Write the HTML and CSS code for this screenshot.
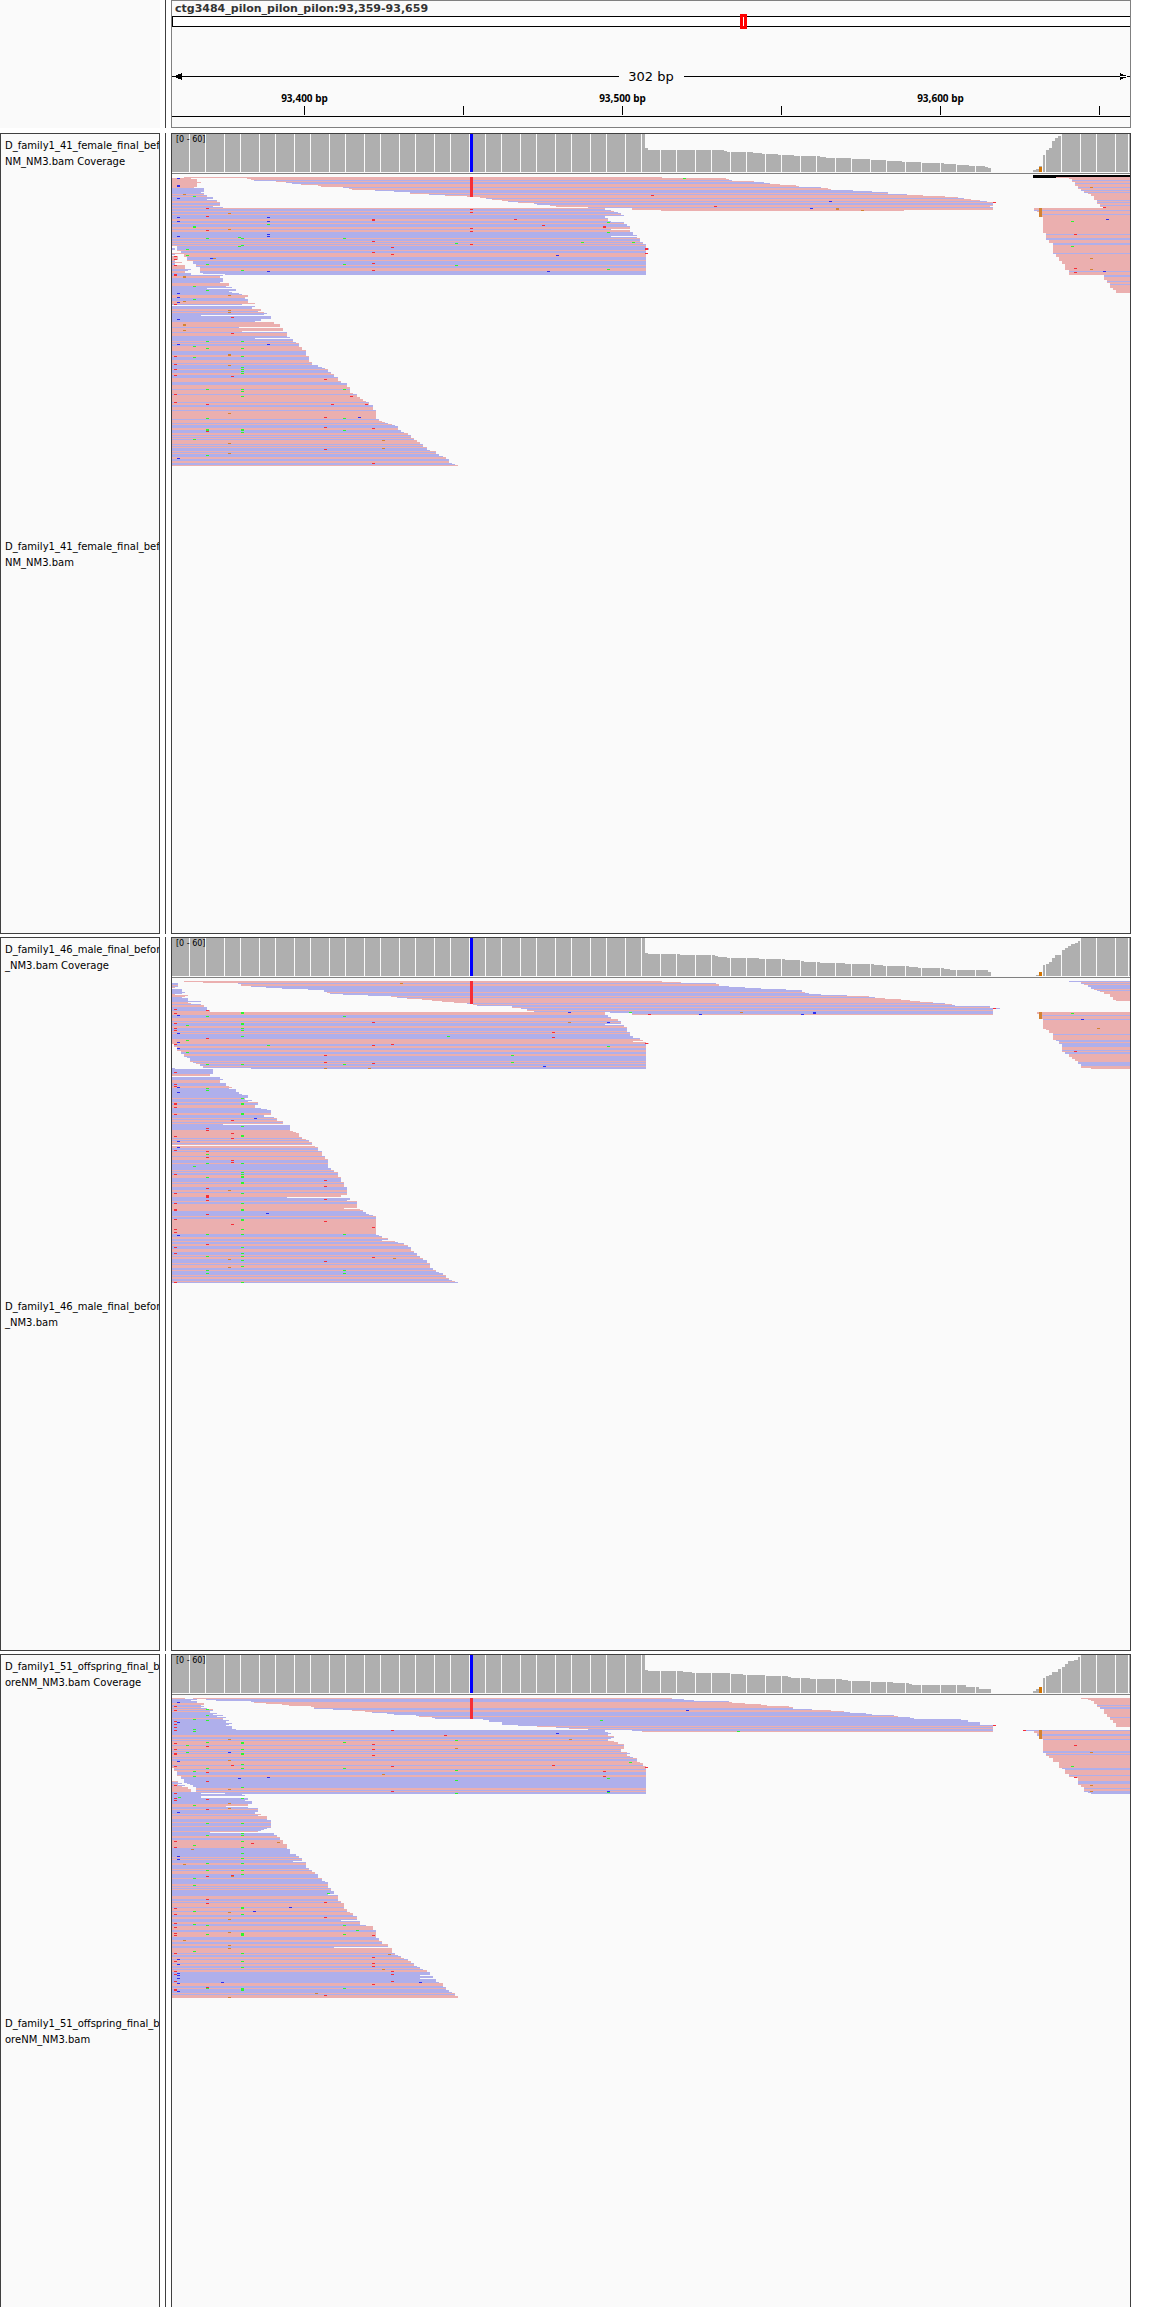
FILE: index.html
```html
<!DOCTYPE html>
<html lang="en">
<head>
<meta charset="utf-8">
<title>ctg3484_pilon_pilon_pilon:93,359-93,659</title>
<link rel="stylesheet" href="styles.css">
</head>
<body>
<main class="viewer">
  <header class="panel panel-header">
    <div class="names names-blank"></div>
    <div class="divider"></div>
    <div class="data data-header">
      <h1 class="locus">ctg3484_pilon_pilon_pilon:93,359-93,659</h1>
      <div class="ideogram"><span class="window-marker"></span></div>
      <div class="span-row">
        <svg class="arrow" viewBox="0 0 11 7"><path d="M0 3H11V4H0ZM3 3L10 0V7L3 4Z"/></svg>
        <span class="rule"></span>
        <span class="span-label">302 bp</span>
        <span class="rule"></span>
        <svg class="arrow" viewBox="0 0 11 7"><path d="M0 3H11V4H0ZM8 3L1 0V7L8 4Z"/></svg>
      </div>
      <div class="tick-labels">
        <span></span><span>93,400 bp</span><span></span><span>93,500 bp</span><span></span><span>93,600 bp</span><span></span>
      </div>
      <div class="ticks"><i></i><i></i><i></i><i></i><i></i><i></i><i></i></div>
    </div>
  </header>

  <section class="panel panel-tall">
    <div class="names">
      <p class="name name-coverage">D_family1_41_female_final_before<br>NM_NM3.bam Coverage</p>
      <p class="name name-reads">D_family1_41_female_final_before<br>NM_NM3.bam</p>
    </div>
    <div class="divider"></div>
    <div class="data">
      <div class="coverage"><span class="range">[0 - 60]</span><svg class="coverage-plot" data-track="0" viewBox="172 0 958 38" preserveAspectRatio="none"></svg></div>
      <svg class="reads" data-track="0" viewBox="172 -3 958 310" preserveAspectRatio="none"></svg>
    </div>
  </section>

  <section class="panel">
    <div class="names">
      <p class="name name-coverage">D_family1_46_male_final_beforeNM<br>_NM3.bam Coverage</p>
      <p class="name name-reads">D_family1_46_male_final_beforeNM<br>_NM3.bam</p>
    </div>
    <div class="divider"></div>
    <div class="data">
      <div class="coverage"><span class="range">[0 - 60]</span><svg class="coverage-plot" data-track="1" viewBox="172 0 958 38" preserveAspectRatio="none"></svg></div>
      <svg class="reads" data-track="1" viewBox="172 -3 958 310" preserveAspectRatio="none"></svg>
    </div>
  </section>

  <section class="panel">
    <div class="names">
      <p class="name name-coverage">D_family1_51_offspring_final_bef<br>oreNM_NM3.bam Coverage</p>
      <p class="name name-reads">D_family1_51_offspring_final_bef<br>oreNM_NM3.bam</p>
    </div>
    <div class="divider"></div>
    <div class="data">
      <div class="coverage"><span class="range">[0 - 60]</span><svg class="coverage-plot" data-track="2" viewBox="172 0 958 38" preserveAspectRatio="none"></svg></div>
      <svg class="reads" data-track="2" viewBox="172 -3 958 310" preserveAspectRatio="none"></svg>
    </div>
  </section>
</main>
<script src="tracks.js"></script>
</body>
</html>
```
FILE: styles.css
```css
* { box-sizing: border-box; }
html, body { height: 100%; }
body {
  margin: 0;
  overflow: hidden;
  background: #fff;
  color: #000;
  font-family: "DejaVu Sans", sans-serif;
}
.viewer {
  display: flex;
  flex-direction: column;
  gap: 3px;
  padding-right: 19px;
}
.panel {
  display: grid;
  grid-template-columns: 160px 1px minmax(0, 1fr);
  column-gap: 5px;
  flex: none;
  height: 714px;
}
.panel-header { height: 128px; margin-bottom: 2px; }
.panel-tall { height: 801px; }
.names {
  display: flex;
  flex-direction: column;
  overflow: hidden;
  border: 1px solid #404040;
  background: #fafafa;
}
.names-blank { border: 0; }
.divider { background: #404040; }
.name {
  display: grid;
  align-content: center;
  margin: 0;
  padding-left: 4px;
  font-size: 10px;
  line-height: 16px;
  white-space: nowrap;
}
.name-coverage { height: 40px; }
.name-reads { flex: 1; padding-top: 2px; }
.data {
  border: 1px solid #404040;
  background: #fafafa;
  overflow: hidden;
}
.data-header { border-color: #808080; }

.locus {
  margin: 0;
  padding-left: 3px;
  color: #333;
  font-size: 11px;
  font-weight: bold;
  line-height: 15px;
}
.ideogram {
  position: relative;
  height: 11px;
  border: 1px solid #000;
  border-right: 0;
  background: #fff;
}
.window-marker {
  position: absolute;
  left: 59.2%;
  top: -3px;
  width: 7px;
  height: 15px;
  border: 3px solid #f00;
}
.span-row {
  display: flex;
  align-items: center;
  height: 19px;
  margin-top: 40px;
}
.rule { flex: 1; height: 1px; background: #000; }
.arrow { width: 11px; height: 7px; flex: none; }
.span-label {
  width: 65px;
  font-size: 13px;
  line-height: 19px;
  text-align: center;
}
.tick-labels {
  display: grid;
  grid-template-columns: 53fr repeat(5, 159fr) 110fr;
  margin-top: 4px;
  font-family: "Noto Sans", sans-serif;
  font-size: 10px;
  font-weight: bold;
  line-height: 16px;
  text-align: center;
}
.ticks {
  display: grid;
  grid-template-columns: 132fr repeat(5, 159fr) 31fr;
  height: 11px;
  border-bottom: 1px solid #000;
}
.ticks i { height: 9px; border-left: 1px solid #000; }
.ticks i:first-child { border: 0; }

.coverage {
  position: relative;
  height: 40px;
  border-bottom: 1px solid #808080;
}
.coverage-plot { display: block; width: 100%; height: 38px; }
.range {
  position: absolute;
  left: 4px;
  top: 1px;
  font-size: 8px;
  line-height: 10px;
}
.reads { display: block; width: 100%; height: 310px; }
svg { shape-rendering: crispEdges; }

.p { fill: #ebafaf; }
.b { fill: #afafeb; }
.mr { fill: #f52d37; }
.mg { fill: #2df52d; }
.mb { fill: #2d2df0; }
.mo { fill: #d28232; }
.gray { fill: #afafaf; }
.grid { fill: #fafafa; }
.snp { fill: #00f; }
.orange { fill: #d27300; }
```
FILE: tracks.js
```js
// Horizontal units are columns of the 958-column window that starts at 172.
// A read group is [first row, row after last, strand runs, left steps, right steps];
// a step "row:column" holds until the next step, and column 0 leaves the row empty.
const tracks = [
  {
    coverage: "172:38 645:24 648:22 724:21 727:20 753:19 762:18 778:17 794:16 820:15 826:14 851:13 871:12 887:11 902:10 921:9 944:8 957:7 969:6 985:5 988:4 991:0 1033:2 1036:3 1039:6 1042:0 1043:17 1046:22 1049:24 1052:31 1055:34 1058:36 1061:38",
    low: 5,
    bar: 20,
    groups: [
      [1, 31, "p10b6pbpb4p2b2pb2", "0:172", "1:191 2:197 5:201 6:197 10:194 11:204 15:201 16:204 18:207 20:213 22:207 23:217 25:220 29:213 30:223"],
      [0, 34, "p3bpb2p3bp2b3pbp3bp2bpb2p2bp3", "0:184 1:247 2:251 3:254 4:276 5:286 6:292 7:301 8:318 9:321 10:343 11:349 12:352 13:375 14:394 15:410 17:429 18:445 19:467 20:480 21:486 22:492 23:502 24:508 25:518 26:534 27:537 28:550 29:556 30:588 31:632 33:661", "0:662 1:726 2:729 3:732 4:754 5:764 6:770 7:780 8:796 9:799 10:821 11:828 12:831 13:853 14:872 15:888 17:907 18:923 19:945 20:958 21:964 22:971 23:980 24:987 25:996 26:993 29:990 30:993 33:904"],
      [31, 98, "pb2pb2pb4p2b2pb3p2bp2b6pb2pbpbpb4pb2p4b3pb4pb2p3b4", "31:172 69:177 74:181 77:184 80:187 84:193 87:196 90:200 96:203 97:225", "31:605 33:611 34:614 35:618 36:621 37:621 38:624 39:605 41:608 44:611 45:624 47:627 49:630 52:611 53:630 55:633 57:633 58:637 59:611 60:637 61:640 65:643 67:646 71:649 73:646 76:648 77:646"],
      [71, 98, "b5pb2p5bpb2p4b2p2b3p4", "71:172", "71:175 73:0 76:184 77:175 78:0 79:178 83:175 85:182 86:175 88:185 92:191 93:188 94:185 96:191"],
      [98, 289, "bp2b5p3b9p3b3p3b5p2bpb9p5bp4bp3b5pbpb2p5b4p2b3p3bpb4pb3p2b3p4b3p4bp4bp7bp2b2p3bp8bp3bpb3p2b3p2bpbpbp4bpbpb3pbpb3p2b2p2b2p", "98:172", "98:223 99:220 101:223 105:220 106:229 109:226 110:232 111:207 112:236 114:229 115:232 116:239 117:242 118:248 120:245 122:248 126:255 127:242 128:0 129:255 130:252 132:261 134:258 135:264 136:267 137:264 138:201 139:271 142:261 144:255 145:274 147:280 150:239 151:283 154:242 155:287 160:290 161:255 162:293 165:296 166:299 170:302 173:306 179:309 185:312 188:318 190:322 191:325 192:328 195:331 197:334 200:338 204:341 206:347 210:350 216:353 217:357 220:360 222:363 224:366 225:369 228:373 233:376 242:379 244:382 245:385 246:388 247:392 248:395 249:398 253:401 255:404 256:408 258:411 261:414 263:417 265:420 267:423 270:427 273:430 274:436 277:439 279:443 280:446 282:449 286:452 287:455 288:458"],
      [0, 31, "p3bp2bp3bp2bpbp7bpbp2bp2", "0:1056 1:1069 2:1072 5:1075 9:1078 12:1081 14:1084 16:1088 17:1091 19:1094 23:1097 27:1100 30:1103", "0:1130"],
      [31, 98, "p2bp3bp19bp3b2p3b2p8bp17bp3", "31:1034 34:1037 35:1039 40:1043 56:1046 60:1046 63:1049 66:1053 77:1056 80:1059 84:1062 87:1065 93:1069", "0:1130"],
      [98, 116, "b2p4bp2bp8", "98:1104 103:1107 106:1110 111:1113 113:1116", "0:1130"]
    ],
    orange: [31, 9],
    marks: "r174:79,82,88,97,98,127,179,187,192,198,217,225 b177:1,8,9,21,40,44,59,116,120,125,142,167,281 o183:17,99,100,124,147,148,153 g186:72,78 g193:19,49,50,109,122,169,180,262 r206:31,39,53,227,254 g206:61,87,113,164,171,212,241,252,253,278 o228:36,52,118,133,135,177,178,188,236,266,276 g241:61,68,93,164,171,179,190,192,194,196,212,214,219,252,253,255 g238:60,69 b267:40,44,57,59,94,167 g267:47 g343:61,87,212,241,253 r372:42,43,64,75,86,93,251,286 r391:70,77 r324:202,240,250,272 r231:140,156,199 r470:32,35,51,54,67 g455:66,88 b358:240 r350:219 r331:227 r365:227 o382:263,271 b210:81 o213:81 r514:42 r542:48 r603:49,50 g607:45,55,92 g581:65 g632:65 b556:78 b547:94 g683:1 r651:18 r993:25 b829:24 b810:31 o836:31,32 o861:33 r714:29 r645:71,72,76 r1074:57,91,95 g1071:44,69 b1106:42 o1090:10,81,92 r1103:30 b1103:94"
  },
  {
    coverage: "172:38 645:23 648:22 680:21 715:20 718:19 727:18 759:17 785:16 800:15 804:14 820:13 845:12 874:11 883:10 909:9 918:8 944:7 950:6 988:4 991:0 1036:1 1039:4 1042:0 1043:11 1046:12 1049:14 1052:18 1055:21 1062:26 1065:28 1068:30 1071:32 1075:33 1078:35 1081:38",
    low: 4,
    bar: 23,
    groups: [
      [2, 31, "b2pbpbb5p3b5p2bp2b2", "0:172", "2:178 6:175 7:0 8:182 11:185 12:182 13:175 14:188 15:185 16:182 17:188 20:201 21:188 22:191 23:201 24:204 26:207 29:210"],
      [0, 34, "p2bp2b6pb3pbp5bpb2pb2pb3", "0:184 1:203 2:238 3:241 5:251 6:266 7:282 8:308 9:324 11:327 12:330 13:343 14:368 15:391 16:397 17:407 18:422 19:432 20:442 21:454 22:467 23:473 24:477 25:512 27:521 28:527 30:534 31:610 32:632", "0:662 1:681 2:716 3:719 5:729 6:745 7:761 8:786 9:802 11:805 12:809 13:821 14:847 15:869 16:875 17:885 18:901 19:910 20:920 21:933 22:945 23:952 24:955 25:990 27:1000 28:993"],
      [31, 88, "p3b3p3bpb3p2b3pbpb5p5b2p2b2p2b2p2b5pbpb2pb2", "31:172 63:174 66:177 70:181 73:184 76:187 77:190 81:193 82:196 83:200 85:203 87:251", "31:605 34:608 36:611 38:618 40:621 43:605 44:624 46:627 51:630 55:633 57:640 59:643 60:633 61:646 62:649 63:646"],
      [87, 302, "b6p2bb3p3b3p2b10pb3pb2p3b5p2b3pbp2bpb6p8bpbp2bp4b2pbp4bp3b3pb6pbpb2p3b4pbp3b3p2bp4b4pb2p7b5pb2p15b3p2b2pb2p2b3p3b3pbp2b4pbp3b2pb4pbp2b2pb", "87:172", "87:175 88:213 93:210 95:0 96:220 98:223 99:220 102:226 105:229 106:232 107:229 108:236 111:239 113:242 114:248 117:245 119:252 120:248 121:258 124:255 127:261 128:267 129:271 134:264 136:274 137:277 140:283 143:223 144:290 150:293 151:296 152:299 156:302 158:306 159:309 161:312 164:0 165:315 166:318 170:322 175:325 178:328 187:331 189:334 191:338 196:341 201:344 206:347 214:341 216:287 217:350 219:347 220:357 227:344 228:360 229:363 231:366 233:369 234:373 235:376 254:379 255:382 257:388 259:382 260:395 261:398 262:404 264:408 266:411 270:414 272:417 275:420 277:423 279:427 282:430 287:433 289:436 291:439 292:443 294:446 297:449 299:452 300:455 301:458"],
      [0, 20, "bpbpb4pbp10", "0:1069 1:1081 3:1084 4:1088 6:1091 8:1094 9:1097 10:1100 11:1104 13:1110 16:1113 19:1116", "0:1130"],
      [31, 88, "p3bp3bp14bp5b2pb4p3bpb2p8b4p", "31:1037 33:1039 38:1043 48:1046 49:1049 52:1053 59:1056 60:1059 63:1062 71:1065 73:1069 76:1072 78:1075 80:1078 83:1081 87:1091", "0:1130"]
    ],
    orange: [31, 7],
    marks: "r174:28,32,42,47,49,63,91,103,105,122,123,126,133,155,169,193,212,222,228,229,238,248,251,266,272,301 b177:34,52,61,67,106,111,160,166,254 r206:29,57,147,149,170,176,207,214,215,216,219,233,263 g206:35,83,107,109,173,182,196,253,275,289,292 g241:31,32,42,43,47,49,55,83,117,122,123,132,133,145,154,155,182,191,193,195,196,201,202,212,222,228,229,238,239,248,253,266,272,275,279,285,301 g343:35,83,253,289,292 r324:74,81,199,205,218,240,280 r372:41,64,82,246,276 r231:139,152,157,179,181,243 o228:209,278,286 b254:137 b266:232 g186:44,59,71 o324:87 o368:87 g447:55 r391:63 g267:64 o393:277 o400:2 g193:185 r993:27 b568:31 g629:31 o740:31 b699:33 r648:33 b801:33 b813:31,32 o568:41 b607:41 r552:51,56 g607:65 g511:74,81 b543:85 r645:62 g1071:32 b1081:38 o1097:47 r1074:70"
  },
  {
    coverage: "172:38 645:23 648:22 683:21 692:20 730:19 743:18 766:17 788:16 791:15 810:14 842:13 848:12 871:11 893:10 909:9 912:8 966:6 979:4 991:0 1033:2 1036:4 1039:6 1042:0 1043:15 1046:17 1049:18 1052:21 1058:24 1062:26 1065:29 1068:32 1074:33 1078:36 1081:38",
    low: 6,
    bar: 21,
    groups: [
      [0, 32, "pb4p2b2pbpbpb6pb11", "0:172", "0:185 1:197 2:191 3:197 5:204 7:201 8:204 9:201 10:207 11:213 13:210 15:217 16:213 17:223 18:217 19:226 20:223 22:229 23:226 25:232 26:229 27:226 28:232 31:236"],
      [0, 34, "pb3p6b2p2b4pb9pbpb2p", "0:193 1:206 2:216 3:251 4:254 5:266 6:282 7:289 8:311 9:314 11:333 12:352 13:365 14:372 15:387 16:394 17:416 18:419 19:432 20:435 21:483 22:489 24:502 27:518 28:537 29:556 30:569 31:588 32:632 33:642", "0:672 1:684 2:694 3:729 4:732 5:745 6:761 7:767 8:789 9:793 11:812 12:831 13:844 14:850 15:866 16:872 17:894 18:898 19:910 20:914 21:961 22:968 24:980 27:996 28:993"],
      [32, 96, "b5p2b2pbp4bp3bpbpbp3bpb2p4bp3bp2b3p2b11p2bpb2p", "32:172 70:174 73:177 78:181 81:184 85:187 86:190 87:193 89:196 94:200 95:225", "32:605 34:608 35:611 36:608 38:614 40:611 41:608 43:614 44:618 46:624 51:621 54:627 55:630 56:627 58:630 59:633 60:637 64:640 65:643 68:646 69:648 70:646"],
      [83, 95, "pb2pbp6b", "83:172", "83:178 85:182 86:178 87:185 88:182 89:188 91:191 94:201"],
      [95, 300, "b11p3b2pb4pbp3b3pb3pb4pb4p2b2p8b9pbpb3p2b4pbp3b4pb5p2bpbpb6p3b2pbp4bp3bp3b2p2b3p2b2p4b2p5b3p2b2p2b2p5bpb2p2bp3bp2b2pbp2", "95:172", "95:201 96:242 97:245 98:201 99:201 100:248 102:245 103:252 106:248 108:226 109:248 110:258 114:255 116:261 117:258 118:267 122:271 130:267 131:264 132:261 133:258 134:210 135:274 137:277 139:280 142:283 146:287 151:290 156:296 158:299 160:302 163:293 164:306 170:309 172:312 174:315 176:318 180:322 183:325 184:328 190:331 193:334 196:328 197:338 203:341 205:344 211:347 214:350 215:353 218:357 222:341 223:360 227:366 228:373 232:376 240:379 243:382 246:388 249:334 250:392 255:395 257:398 258:401 260:404 261:408 263:411 265:414 268:417 269:420 271:423 272:427 274:430 276:430 277:420 278:433 280:420 281:436 284:439 285:443 289:446 292:449 294:452 295:455 298:458"],
      [0, 29, "p7bpb2p8bp9", "0:1081 1:1088 2:1091 3:1094 6:1097 9:1100 11:1104 16:1107 19:1110 22:1113 25:1116", "0:1130"],
      [32, 96, "bp3b2p3bp11b2pbp13b2p5bp5b3p4bp2b2", "32:1023 33:1034 35:1037 38:1039 41:1043 55:1046 58:1049 60:1053 64:1059 70:1062 71:1065 76:1069 79:1075 80:1078 87:1081 89:1084 94:1088 95:1091", "0:1130"]
    ],
    orange: [32, 9],
    marks: "r174:8,12,23,26,29,32,45,51,55,56,68,87,95,100,102,143,149,210,216,225,229,235,237,255,263,273,276,283,291,292 b177:4,24,63,114,158,161,261,266,275,277,280,285,293 g193:21,31,33,73,78,107,147,180,187,213,226,253 g206:11,17,22,44,70,125,137,165,172,227,236,290 r206:48,74,83,101,111,178,201,205,289 g241:44,45,51,55,56,66,70,89,100,125,135,137,143,149,155,160,165,172,176,209,210,216,235,236,237,255,263,269,290,291,292 o228:41,62,91,105,110,214,221,234,247,250,299 b228:54 g343:44,70,227,236,290 r372:46,51,57,237,259,265,268,286 r391:32,68,93,273,276,283 r324:204,219,297 g455:42,72,82,95 o455:50 r444:37 b238:80 b267:79 r231:67,177 o231:178 b289:209 b253:213 b221:284 b419:284 o388:256 o382:76,271 g356:232 g186:47,54 o183:166,242 o191:151 g178:99 g327:195 o277:144 r251:145 o315:295 r993:27 r1023:32 b556:35 o569:41 r552:67 r603:73,78 g607:80,94 b607:93 g629:64 g600:22 g737:33 b686:12 r645:69 r1074:47,79 o1090:54,87,93 g1071:68"
  }
];

const rect = (x, y, w, h) => `M${x} ${y}h${w}v${h}h${-w}z`;
const path = (name, d) => `<path class="${name}" d="${d}"/>`;
const steps = text => text.split(" ").map(s => s.split(":").map(Number));
const at = (list, row) => list.reduce((v, s) => (s[0] <= row ? s[1] : v), list[0][1]);

function drawCoverage(svg, track) {
  const list = steps(track.coverage);
  let bars = "", lines = "";
  list.forEach(([x, h], i) => {
    const end = i + 1 < list.length ? list[i + 1][0] : 1130;
    if (h) bars += rect(x, 38 - h, end - x, h);
  });
  for (let x = 189; x < 485; x += 35) lines += rect(x, 0, 1, 38) + rect(x + 16, 0, 1, 38);
  for (let x = 485; x < 1125; x += 35) lines += rect(x, 0, 1, 38) + rect(x + 16, 0, 1, 38);
  lines += rect(1128, 0, 1, 38);
  svg.innerHTML = path("gray", bars) + path("grid", lines) +
    path("snp", rect(470, 0, 3, 38)) + path("orange", rect(1039, 38 - track.low, 3, track.low));
}

function drawReads(svg, track, index) {
  const fill = { p: "", b: "" };
  for (const [from, to, runs, left, right] of track.groups) {
    const strand = [];
    for (const m of runs.matchAll(/([pb])(\d*)/g))
      for (let i = 0; i < Number(m[2] || 1); i++) strand.push(m[1]);
    const l = steps(left), r = steps(right);
    for (let row = from; row < to; row++) {
      const x = at(l, row), w = at(r, row) - x;
      if (w > 0) fill[strand[(row - from) % strand.length]] += rect(x, row, w, 1);
    }
  }
  const marks = { r: rect(470, 0, 3, track.bar), g: "", b: "", o: rect(1039, track.orange[0], 3, track.orange[1]) };
  for (const m of track.marks.matchAll(/([rgbo])(\d+):([\d,]+)/g))
    for (const row of m[3].split(",")) marks[m[1]] += rect(m[2], row, 3, 1);
  let out = path("p", fill.p) + path("b", fill.b);
  for (const k in marks) out += path("m" + k, marks[k]);
  if (index === 0) out += path("ink", rect(1033, -2, 97, 2) + rect(1033, 0, 23, 1));
  svg.innerHTML = out;
}

document.querySelectorAll(".coverage-plot").forEach(s => drawCoverage(s, tracks[s.dataset.track]));
document.querySelectorAll(".reads").forEach(s => drawReads(s, tracks[s.dataset.track], Number(s.dataset.track)));
```
